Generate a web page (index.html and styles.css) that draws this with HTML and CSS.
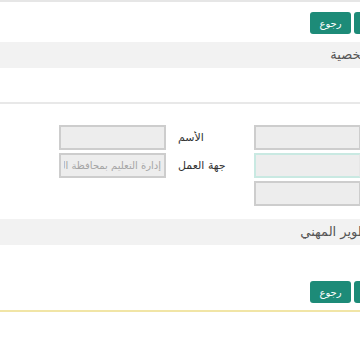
FILE: index.html
```html
<html lang="ar">

<head>
    <meta charset="UTF-8">
    <meta name="viewport" content="width=device-width, initial-scale=1.0">
    <title>البيانات الشخصية</title>
    <link rel="stylesheet" href="styles.css">
</head>

<body>
    <div class="page">
        <div class="topline"></div>

        <div class="actions">
            <button class="btn">حفظ</button>
            <button class="btn">رجوع</button>
        </div>

        <div class="band">الشخصية</div>
        <div class="divider"></div>

        <div class="form">
            <label class="lbl">الهوية</label>
            <input class="field" type="text" readonly>
            <label class="lbl">الأسم</label>
            <input class="field" type="text" readonly>

            <label class="lbl">الجوال</label>
            <input class="field focus" type="text">
            <label class="lbl">جهة العمل</label>
            <input class="field" type="text" value="إدارة التعليم بمحافظة الخرج" readonly>

            <label class="lbl">البريد</label>
            <input class="field" type="text" readonly>
        </div>

        <div class="band band-second">التطوير المهني</div>

        <div class="actions actions-bottom">
            <button class="btn">حفظ</button>
            <button class="btn">رجوع</button>
        </div>
        <div class="yellowline"></div>
    </div>
</body>

</html>
```

FILE: styles.css
```css
body {
    margin: 0;
    overflow: hidden;
    background-color: white;
    font-family: "DejaVu Sans", "Noto Sans", sans-serif;
}

.page {
    width: 400px;
    direction: rtl;
}

.topline {
    height: 2px;
    background-color: #e6e6e6;
}

.actions {
    display: flex;
    gap: 3px;
    padding: 10px 5px 0 0;
}

.btn {
    width: 41px;
    height: 22px;
    padding: 0;
    border: none;
    border-radius: 3px;
    background-color: #1d8b78;
    color: white;
    font-family: inherit;
    font-size: 10px;
    cursor: pointer;
}

.band {
    height: 26px;
    margin-top: 8px;
    padding-right: 20px;
    line-height: 26px;
    background-color: #f2f2f2;
    color: #555;
    font-size: 13px;
    white-space: nowrap;
}

.divider {
    height: 34px;
    border-bottom: 2px solid #e8e8e8;
}

.form {
    display: grid;
    grid-template-columns: 39px 107px 88px 107px;
    grid-auto-rows: 25px;
    row-gap: 3px;
    padding-top: 21px;
}

.lbl {
    align-self: center;
    padding-left: 12px;
    text-align: left;
    color: #333;
    font-size: 11px;
    white-space: nowrap;
    overflow: hidden;
}

.field {
    box-sizing: border-box;
    width: 100%;
    height: 25px;
    padding: 0 3px;
    border: 2px solid #cdcdcd;
    background-color: #ededed;
    color: #a5a5a5;
    font-family: inherit;
    font-size: 10px;
    direction: rtl;
    outline: none;
}

.field.focus {
    border: 2px solid #c9e9e2;
    border-right-color: #e6e6e6;
}

.band-second {
    margin-top: 13px;
}

.actions-bottom {
    padding-top: 36px;
}

.yellowline {
    height: 2px;
    margin-top: 7px;
    background-color: #f1e5a6;
}
```
